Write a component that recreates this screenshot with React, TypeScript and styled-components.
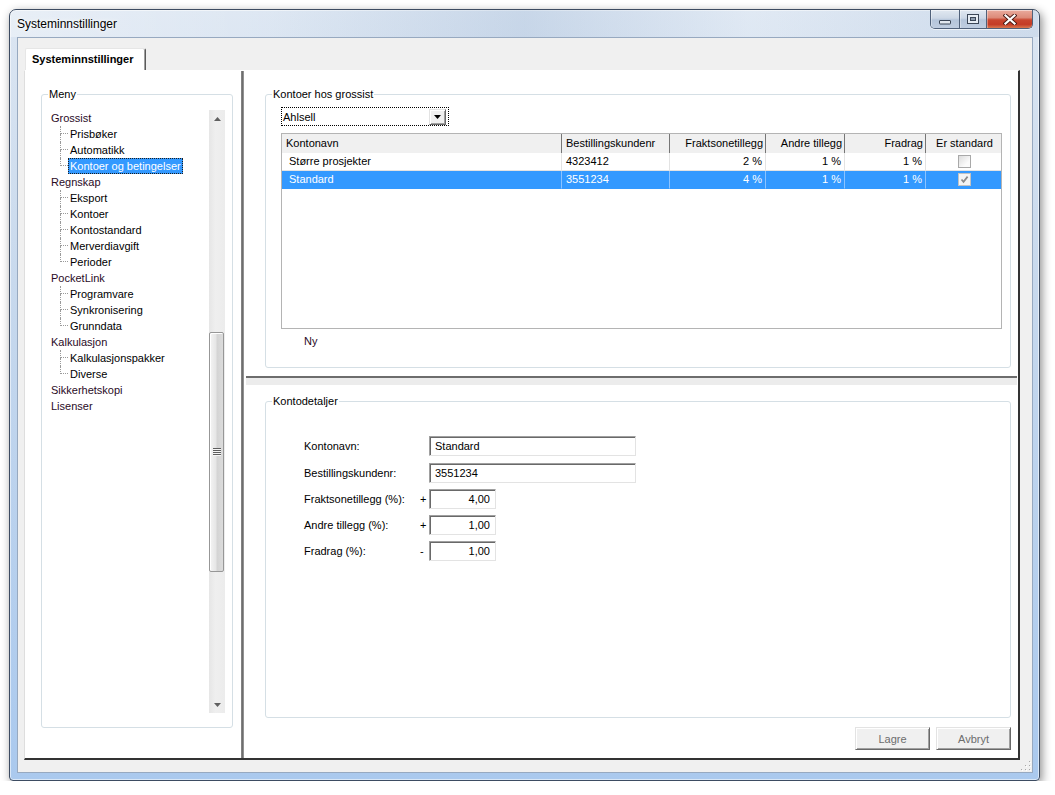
import * as React from "react";
import styled, { createGlobalStyle } from "styled-components";

const GlobalStyle = createGlobalStyle`
  html, body {
    margin: 0;
    padding: 0;
    background: #fff;
  }
  body {
    font-family: "Liberation Sans", Arial, sans-serif;
    font-size: 11px;
    color: #000;
  }
  * {
    box-sizing: border-box;
  }
`;

// ---- window frame ----

const Window = styled.div`
  margin: 9px 0 0 9px;
  width: 1031px;
  height: 772px;
  border: 1px solid #3d4c62;
  border-radius: 7px 7px 4px 4px;
  background: linear-gradient(to bottom, #dce6f2 0%, #c8d9ed 35%, #aac9ee 100%);
  box-shadow: inset 0 0 0 1px rgba(255, 255, 255, 0.55), 2px 3px 10px rgba(0, 0, 0, 0.45);
  display: flex;
  flex-direction: column;
`;

const TitleBar = styled.div`
  height: 27px;
  display: flex;
  background: linear-gradient(
    to right,
    rgba(255, 255, 255, 0.35) 0%,
    rgba(255, 255, 255, 0.05) 25%,
    rgba(110, 145, 190, 0.18) 50%,
    rgba(255, 255, 255, 0.12) 72%,
    rgba(110, 145, 190, 0.12) 100%
  );
  border-radius: 6px 6px 0 0;
`;

const Title = styled.div`
  flex: 1;
  align-self: center;
  padding-left: 7px;
  font-family: "Liberation Sans", Arial, sans-serif;
  font-size: 12px;
  color: #000;
  text-shadow: 0 0 6px #fff, 0 0 3px rgba(255, 255, 255, 0.9);
`;

const CaptionButtons = styled.div`
  display: flex;
  height: 19px;
  margin-right: 6px;
  border: 1px solid #50617a;
  border-top: none;
  border-radius: 0 0 5px 5px;
  overflow: hidden;
  box-shadow: 0 1px 0 rgba(255, 255, 255, 0.6);
`;

const CaptionButton = styled.div<{ $w: number; $close?: boolean; $first?: boolean }>`
  width: ${(p) => p.$w}px;
  display: flex;
  align-items: center;
  justify-content: center;
  border-left: ${(p) => (p.$first ? "none" : "1px solid #50617a")};
  background: ${(p) =>
    p.$close
      ? "linear-gradient(to bottom, #eaab9d 0%, #dd8b79 42%, #c9462f 55%, #c43c26 80%, #d9774f 100%)"
      : "linear-gradient(to bottom, #e1e8f1 0%, #cdd8e6 45%, #b5c5da 55%, #bfcde0 100%)"};
  box-shadow: inset 0 1px 0 rgba(255, 255, 255, 0.5), inset 1px 0 0 rgba(255, 255, 255, 0.35);
`;

const Client = styled.div`
  flex: 1;
  margin: 0 6px 7px 7px;
  background: #f0f0f0;
  border: 1px solid #97a9c0;
  display: flex;
  flex-direction: column;
`;

const TabStrip = styled.div`
  height: 32px;
  padding: 10px 0 0 7px;
  display: flex;
`;

const Tab = styled.div`
  width: 121px;
  height: 22px;
  background: #fff;
  border-top: 1px solid #e6e6e6;
  border-left: 1px solid #e6e6e6;
  border-right: 1px solid #5a5a5a;
  box-shadow: inset -1px 0 0 #a0a0a0;
  border-radius: 2px 2px 0 0;
  padding-left: 6px;
  font-weight: bold;
  line-height: 20px;
  white-space: nowrap;
`;

const Page = styled.div`
  height: 690px;
  margin: 0 12px 0 6px;
  background: #fff;
  border-top: 1px solid #fff;
  border-left: 1px solid #dedede;
  border-right: 2px solid #333;
  border-bottom: 2px solid #333;
  display: flex;
`;

const ClientFooter = styled.div`
  flex: 1;
  display: flex;
  justify-content: flex-end;
  align-items: flex-end;
  padding: 0 1px 1px 0;
`;

// ---- group boxes ----

const GroupBox = styled.fieldset<{ $h: number }>`
  margin: 0;
  padding: 0;
  min-width: 0;
  height: ${(p) => p.$h}px;
  border: 1px solid #d5dfe5;
  border-radius: 3px;
`;

const GroupTitle = styled.legend`
  margin-left: 6px;
  padding: 0 1px;
  line-height: 13px;
  font-size: 11px;
`;

// ---- left menu ----

const LeftPanel = styled.div`
  width: 216px;
  padding: 17px 8px 0 16px;
`;

const TreeArea = styled.div`
  display: flex;
  height: 603px;
  margin: 9px 7px 0 6px;
`;

const TreeList = styled.div`
  flex: 1;
`;

const TreeRow = styled.div`
  height: 16px;
  display: flex;
  white-space: nowrap;
`;

const ParentLabel = styled.span`
  padding-left: 3px;
  line-height: 16px;
  color: #2a0b1f;
`;

const Connector = styled.span`
  width: 8px;
  margin-left: 12px;
  display: flex;
  flex-direction: column;
`;

const ConnectorTop = styled.span`
  height: 8px;
  border-left: 1px dotted #9a9a9a;
  border-bottom: 1px dotted #9a9a9a;
`;

const ConnectorBottom = styled.span<{ $last: boolean }>`
  flex: 1;
  border-left: ${(p) => (p.$last ? "none" : "1px dotted #9a9a9a")};
`;

const ChildLabel = styled.span<{ $selected?: boolean }>`
  height: 16px;
  padding: 0 1px;
  line-height: 14px;
  border: 1px dotted ${(p) => (p.$selected ? "#1d1d1d" : "transparent")};
  background: ${(p) => (p.$selected ? "#3399ff" : "transparent")};
  color: ${(p) => (p.$selected ? "#fff" : "#000")};
`;

const VScroll = styled.div`
  width: 16px;
  display: flex;
  flex-direction: column;
  background: linear-gradient(to right, #e6e6e6, #efefef 40%, #ececec);
`;

const ScrollArrow = styled.div`
  height: 17px;
  display: flex;
  align-items: center;
  justify-content: center;
`;

const ScrollTrack = styled.div`
  flex: 1;
`;

const Thumb = styled.div`
  margin: 205px 1px 0 0;
  height: 240px;
  border: 1px solid #979797;
  border-radius: 2px;
  background: linear-gradient(to right, #f4f4f4 0%, #e6e6e6 45%, #d4d4d4 55%, #dcdcdc 100%);
  box-shadow: inset 1px 1px 0 #fff;
  display: flex;
  align-items: center;
  justify-content: center;
`;

const Grip = styled.div`
  width: 8px;
  height: 8px;
  background: repeating-linear-gradient(to bottom, #5e5e5e 0 1px, #f6f6f6 1px 2px);
`;

// ---- splitters ----

const VSplitter = styled.div`
  width: 3px;
  background: linear-gradient(to right, #8c8c8c, #6e6e6e 50%, #a4a4a4);
`;

const RightPanel = styled.div`
  flex: 1;
  display: flex;
  flex-direction: column;
`;

const UpperPanel = styled.div`
  height: 305px;
  padding: 17px 7px 8px 21px;
`;

const HSplitter = styled.div`
  height: 9px;
  margin: 0 1px 0 2px;
  border-top: 2px solid #6d6d6d;
  background: #ececec;
`;

const LowerPanel = styled.div`
  flex: 1;
  padding: 10px 7px 8px 21px;
  display: flex;
  flex-direction: column;
`;

// ---- accounts list ----

const UpperBody = styled.div`
  padding: 6px 8px 0 15px;
`;

const Combo = styled.div`
  width: 168px;
  height: 19px;
  border: 1px dotted #000;
  background: #fff;
  display: flex;
  align-items: center;
`;

const ComboText = styled.span`
  flex: 1;
  padding-left: 1px;
`;

const ComboButton = styled.span`
  width: 17px;
  height: 16px;
  margin-right: 2px;
  background: #f0f0f0;
  border: 1px solid;
  border-color: #e3e3e3 #696969 #696969 #e3e3e3;
  box-shadow: inset 1px 1px 0 #fff, inset -1px -1px 0 #a0a0a0;
  display: flex;
  align-items: center;
  justify-content: center;
`;

const Grid = styled.div`
  margin-top: 7px;
  height: 196px;
  border: 1px solid #b4b4b4;
  background: #fff;
`;

const GridRow = styled.div<{ $selected?: boolean }>`
  display: grid;
  grid-template-columns: 280px 108px 96px 79px 81px 1fr;
  background: ${(p) => (p.$selected ? "#3399ff" : "transparent")};
  color: ${(p) => (p.$selected ? "#fff" : "#000")};
`;

type Align = "left" | "right" | "center";

const HeaderCell = styled.div<{ $align: Align; $last?: boolean }>`
  height: 19px;
  line-height: 18px;
  padding: 0 2px 0 4px;
  background: #f0f0f0;
  text-align: ${(p) => p.$align};
  border-right: ${(p) => (p.$last ? "none" : "1px solid #767676")};
  white-space: nowrap;
  overflow: hidden;
`;

const Cell = styled.div<{ $align: Align; $selected?: boolean; $first?: boolean; $last?: boolean }>`
  height: 18px;
  line-height: 17px;
  padding: ${(p) => (p.$first ? "0 3px 0 7px" : "0 3px 0 4px")};
  text-align: ${(p) => p.$align};
  border-right: ${(p) => (p.$last ? "none" : `1px solid ${p.$selected ? "#8cc3ff" : "#e3e3e3"}`)};
  border-bottom: 1px solid ${(p) => (p.$selected ? "#3399ff" : "#e3e3e3")};
  white-space: nowrap;
  display: flex;
  align-items: center;
  justify-content: ${(p) => (p.$align === "right" ? "flex-end" : p.$align === "center" ? "center" : "flex-start")};
`;

const CheckBox = styled.span<{ $checked: boolean }>`
  width: 13px;
  height: 13px;
  border: 1px solid ${(p) => (p.$checked ? "#c2c2c2" : "#a9a9a9")};
  background: ${(p) => (p.$checked ? "#f4f4f4" : "linear-gradient(135deg, #dcdcdc, #fbfbfb 70%)")};
  display: flex;
  align-items: center;
  justify-content: center;
`;

const NewLink = styled.div`
  margin: 6px 0 0 23px;
  line-height: 13px;
  color: #2a0b1f;
`;

// ---- details form ----

const Form = styled.div`
  display: grid;
  grid-template-columns: 113px 12px auto;
  grid-template-rows: 27px 26px 26px 26px 20px;
  align-items: start;
  justify-items: start;
  padding: 28px 0 0 38px;
`;

const FieldLabel = styled.span`
  line-height: 20px;
  white-space: nowrap;
`;

const Sign = styled.span`
  line-height: 20px;
  padding-left: 3px;
`;

const Field = styled.input<{ $w: number; $numeric?: boolean }>`
  width: ${(p) => p.$w}px;
  height: 20px;
  margin: 0;
  padding: ${(p) => (p.$numeric ? "0 5px 0 2px" : "0 2px 0 5px")};
  font-family: "Liberation Sans", Arial, sans-serif;
  font-size: 11px;
  color: #000;
  text-align: ${(p) => (p.$numeric ? "right" : "left")};
  background: #fff;
  border: 1px solid;
  border-color: #a0a0a0 #e3e3e3 #e3e3e3 #a0a0a0;
  box-shadow: inset 1px 1px 0 #696969;
  outline: none;
`;

const ButtonRow = styled.div`
  margin-top: 9px;
  display: flex;
  justify-content: flex-end;
  gap: 6px;
`;

const Button = styled.button`
  width: 75px;
  height: 23px;
  padding: 0;
  font-family: "Liberation Sans", Arial, sans-serif;
  font-size: 11px;
  color: #6d6d6d;
  background: #f0f0f0;
  border: 1px solid;
  border-color: #e3e3e3 #696969 #696969 #e3e3e3;
  box-shadow: inset 1px 1px 0 #fff, inset -1px -1px 0 #a0a0a0;
`;

// ---- data ----

const menu = [
  { label: "Grossist", children: ["Prisbøker", "Automatikk", "Kontoer og betingelser"] },
  { label: "Regnskap", children: ["Eksport", "Kontoer", "Kontostandard", "Merverdiavgift", "Perioder"] },
  { label: "PocketLink", children: ["Programvare", "Synkronisering", "Grunndata"] },
  { label: "Kalkulasjon", children: ["Kalkulasjonspakker", "Diverse"] },
  { label: "Sikkerhetskopi", children: [] as string[] },
  { label: "Lisenser", children: [] as string[] },
];

const columns: { title: string; align: Align }[] = [
  { title: "Kontonavn", align: "left" },
  { title: "Bestillingskundenr", align: "left" },
  { title: "Fraktsonetillegg", align: "right" },
  { title: "Andre tillegg", align: "right" },
  { title: "Fradrag", align: "right" },
  { title: "Er standard", align: "center" },
];

const accounts = [
  { name: "Større prosjekter", nr: "4323412", frakt: 2, andre: 1, fradrag: 1, std: false },
  { name: "Standard", nr: "3551234", frakt: 4, andre: 1, fradrag: 1, std: true },
];

const selectedAccount = 1;

const details = [
  { label: "Kontonavn:", sign: "", value: "Standard", numeric: false },
  { label: "Bestillingskundenr:", sign: "", value: "3551234", numeric: false },
  { label: "Fraktsonetillegg (%):", sign: "+", value: "4,00", numeric: true },
  { label: "Andre tillegg (%):", sign: "+", value: "1,00", numeric: true },
  { label: "Fradrag (%):", sign: "-", value: "1,00", numeric: true },
];

// ---- small drawings ----

const MinimizeGlyph = () => (
  <svg width="12" height="5" viewBox="0 0 12 5" style={{ marginTop: 6 }}>
    <rect x="0.5" y="0.5" width="11" height="3.5" rx="0.5" fill="#e2e8ef" stroke="#3b4656" />
  </svg>
);

const MaximizeGlyph = () => (
  <svg width="12" height="10" viewBox="0 0 12 10">
    <rect x="0.5" y="0.5" width="11" height="9" fill="#e6ecf3" stroke="#3b4656" />
    <rect x="3.5" y="3.5" width="5" height="3" fill="#8d9bad" stroke="#3b4656" />
  </svg>
);

const CloseGlyph = () => (
  <svg width="14" height="11" viewBox="0 0 14 11">
    <path d="M2.5 1.5 L11.5 9.5 M11.5 1.5 L2.5 9.5" stroke="#4a1a14" strokeWidth="4" strokeLinecap="square" />
    <path d="M2.5 1.5 L11.5 9.5 M11.5 1.5 L2.5 9.5" stroke="#fff" strokeWidth="2.2" strokeLinecap="square" />
  </svg>
);

const ArrowUp = () => (
  <svg width="7" height="4" viewBox="0 0 7 4">
    <polygon points="0,4 3.5,0 7,4" fill="#606060" />
  </svg>
);

const ArrowDown = () => (
  <svg width="7" height="4" viewBox="0 0 7 4">
    <polygon points="0,0 7,0 3.5,4" fill="#606060" />
  </svg>
);

const ComboArrow = () => (
  <svg width="7" height="4" viewBox="0 0 7 4">
    <polygon points="0,0 7,0 3.5,4" fill="#000" />
  </svg>
);

const CheckMark = () => (
  <svg width="9" height="9" viewBox="0 0 9 9">
    <path d="M1.5 4.5 L3.5 6.8 L7.6 1.6" fill="none" stroke="#8a8a8a" strokeWidth="1.7" />
  </svg>
);

const ResizeGrip = () => (
  <svg width="10" height="10" viewBox="0 0 10 10">
    {[
      [8, 0],
      [4, 4],
      [8, 4],
      [0, 8],
      [4, 8],
      [8, 8],
    ].map(([x, y]) => (
      <g key={`${x}-${y}`}>
        <rect x={x + 1} y={y + 1} width="1" height="1" fill="#fff" />
        <rect x={x} y={y} width="1" height="1" fill="#a8a8a8" />
      </g>
    ))}
  </svg>
);

// ---- page ----

const MenuTree: React.FunctionComponent = () => (
  <TreeList>
    {menu.map((node) => (
      <React.Fragment key={node.label}>
        <TreeRow>
          <ParentLabel>{node.label}</ParentLabel>
        </TreeRow>
        {node.children.map((child, i) => (
          <TreeRow key={child}>
            <Connector>
              <ConnectorTop />
              <ConnectorBottom $last={i === node.children.length - 1} />
            </Connector>
            <ChildLabel $selected={child === "Kontoer og betingelser"}>{child}</ChildLabel>
          </TreeRow>
        ))}
      </React.Fragment>
    ))}
  </TreeList>
);

const AccountGrid: React.FunctionComponent = () => (
  <Grid>
    <GridRow>
      {columns.map((col, i) => (
        <HeaderCell key={col.title} $align={col.align} $last={i === columns.length - 1}>
          {col.title}
        </HeaderCell>
      ))}
    </GridRow>
    {accounts.map((acc, idx) => {
      const selected = idx === selectedAccount;
      const values = [acc.name, acc.nr, `${acc.frakt} %`, `${acc.andre} %`, `${acc.fradrag} %`];
      return (
        <GridRow key={acc.name} $selected={selected}>
          {values.map((v, i) => (
            <Cell key={i} $align={columns[i].align} $selected={selected} $first={i === 0}>
              {v}
            </Cell>
          ))}
          <Cell $align="center" $selected={selected} $last>
            <CheckBox $checked={acc.std}>{acc.std ? <CheckMark /> : null}</CheckBox>
          </Cell>
        </GridRow>
      );
    })}
  </Grid>
);

const App: React.FunctionComponent = () => {
  return (
    <>
      <GlobalStyle />
      <Window>
        <TitleBar>
          <Title>Systeminnstillinger</Title>
          <CaptionButtons>
            <CaptionButton $w={28} $first>
              <MinimizeGlyph />
            </CaptionButton>
            <CaptionButton $w={27}>
              <MaximizeGlyph />
            </CaptionButton>
            <CaptionButton $w={46} $close>
              <CloseGlyph />
            </CaptionButton>
          </CaptionButtons>
        </TitleBar>

        <Client>
          <TabStrip>
            <Tab>Systeminnstillinger</Tab>
          </TabStrip>

          <Page>
            <LeftPanel>
              <GroupBox $h={640}>
                <GroupTitle>Meny</GroupTitle>
                <TreeArea>
                  <MenuTree />
                  <VScroll>
                    <ScrollArrow>
                      <ArrowUp />
                    </ScrollArrow>
                    <ScrollTrack>
                      <Thumb>
                        <Grip />
                      </Thumb>
                    </ScrollTrack>
                    <ScrollArrow>
                      <ArrowDown />
                    </ScrollArrow>
                  </VScroll>
                </TreeArea>
              </GroupBox>
            </LeftPanel>

            <VSplitter />

            <RightPanel>
              <UpperPanel>
                <GroupBox $h={280}>
                  <GroupTitle>Kontoer hos grossist</GroupTitle>
                  <UpperBody>
                    <Combo>
                      <ComboText>Ahlsell</ComboText>
                      <ComboButton>
                        <ComboArrow />
                      </ComboButton>
                    </Combo>
                    <AccountGrid />
                    <NewLink>Ny</NewLink>
                  </UpperBody>
                </GroupBox>
              </UpperPanel>

              <HSplitter />

              <LowerPanel>
                <GroupBox $h={323}>
                  <GroupTitle>Kontodetaljer</GroupTitle>
                  <Form>
                    {details.map((d) => (
                      <React.Fragment key={d.label}>
                        <FieldLabel>{d.label}</FieldLabel>
                        <Sign>{d.sign}</Sign>
                        <Field
                          readOnly
                          defaultValue={d.value}
                          $w={d.numeric ? 67 : 207}
                          $numeric={d.numeric}
                        />
                      </React.Fragment>
                    ))}
                  </Form>
                </GroupBox>
                <ButtonRow>
                  <Button disabled>Lagre</Button>
                  <Button disabled>Avbryt</Button>
                </ButtonRow>
              </LowerPanel>
            </RightPanel>
          </Page>

          <ClientFooter>
            <ResizeGrip />
          </ClientFooter>
        </Client>
      </Window>
    </>
  );
};

export default App;
